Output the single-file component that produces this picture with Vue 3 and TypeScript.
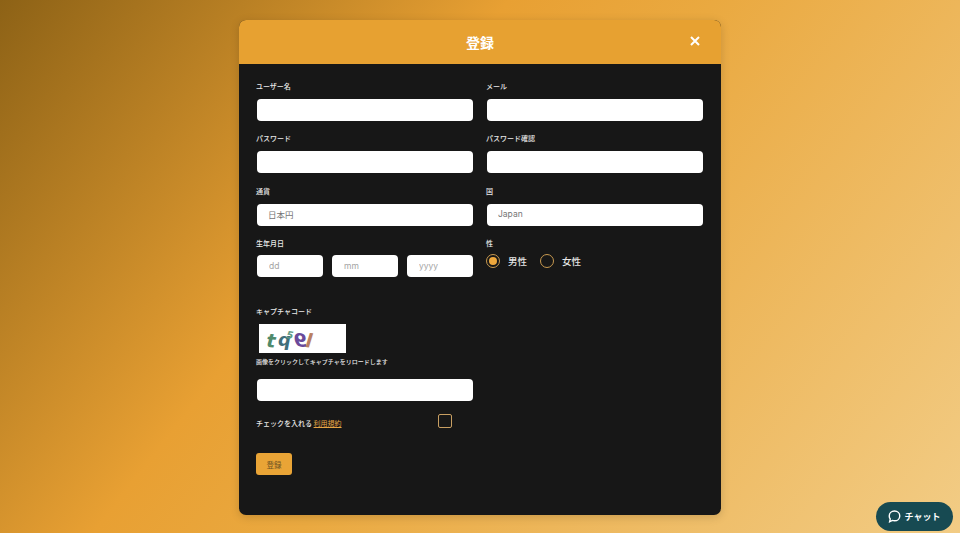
<script setup lang="ts">
const rows = [
  { label: 'ユーザー名', value: '' },
  { label: 'メール', value: '' },
  { label: 'パスワード', value: '' },
  { label: 'パスワード確認', value: '' },
  { label: '通貨', value: '日本円' },
  { label: '国', value: 'Japan' },
]
const dates = ['dd', 'mm', 'yyyy']
const captcha = [
  { ch: 't', transform: 'translate(7 23) rotate(4)', s: 19, c: '#4f8a6b' },
  { ch: 'q', transform: 'translate(19 22)', s: 18, c: '#3f6f7c' },
  { ch: '5', transform: 'translate(27 14) rotate(8)', s: 10, c: '#5f9a84' },
  { ch: '9', transform: 'translate(48 23) scale(-1 1)', s: 19, c: '#6a4a9a' },
  { ch: 'l', transform: 'translate(46 23) rotate(6)', s: 19, c: '#b97f62' },
]
</script>

<template>
  <div class="page">
    <section class="modal">
      <header class="head">
        <h1>登録</h1>
        <svg class="close" viewBox="0 0 12 12" aria-label="閉じる">
          <path d="M2 2 10 10M10 2 2 10" />
        </svg>
      </header>
      <form class="body" @submit.prevent>
        <div class="grid">
          <div v-for="row in rows" :key="row.label" class="field">
            <label>{{ row.label }}</label>
            <input class="input" type="text" :value="row.value" />
          </div>
          <div class="field">
            <label>生年月日</label>
            <div class="dates">
              <input v-for="d in dates" :key="d" class="input date" type="text" :placeholder="d" />
            </div>
          </div>
          <div class="field">
            <label>性</label>
            <div class="radios">
              <span class="radio on"></span><span class="rlabel">男性</span>
              <span class="radio"></span><span class="rlabel">女性</span>
            </div>
          </div>
        </div>

        <div class="captcha-col">
          <label>キャプチャコード</label>
          <svg class="captcha" viewBox="0 0 87 29">
            <text
              v-for="g in captcha"
              :key="g.ch"
              :fill="g.c"
              :font-size="g.s"
              :transform="g.transform"
            >{{ g.ch }}</text>
          </svg>
          <p class="note">画像をクリックしてキャプチャをリロードします</p>
          <input class="input" type="text" />
        </div>

        <div class="terms">
          <span class="agree">チェックを入れる <a href="#">利用規約</a></span>
          <span class="check"></span>
        </div>
        <button class="submit" type="submit">登録</button>
      </form>
    </section>
    <button class="chat">
      <svg viewBox="0 0 16 16"><path d="M8 2.200c3.300 0 5.600 2.300 5.600 5.200S11.300 12.600 8 12.600c-.8 0-1.500-.1-2.200-.4L2.800 13.600l.7-2.900C2.800 9.800 2.400 8.700 2.400 7.400 2.400 4.500 4.700 2.200 8 2.200Z" /></svg>
      <span>チャット</span>
    </button>
  </div>
</template>

<style>
html, body { margin: 0; padding: 0; }
</style>

<style scoped>
.page {
  position: relative;
  box-sizing: border-box;
  width: 960px;
  height: 533px;
  overflow: hidden;
  padding-top: 20px;
  background: linear-gradient(128deg, #8d6216 0%, #e8a033 37%, #eaa940 52%, #f2cc85 100%);
  font-family: "Noto Sans CJK JP", "Noto Sans", sans-serif;
}
.modal {
  width: 482px;
  height: 495px;
  margin: 0 0 0 239px;
  border-radius: 7px;
  overflow: hidden;
  background: #171717;
  box-shadow: 0 2px 10px rgba(0, 0, 0, 0.16);
}
.head {
  position: relative;
  display: flex;
  align-items: center;
  justify-content: center;
  height: 44px;
  background: #e7a131;
}
h1 {
  margin: 0;
  color: #fff;
  font-size: 14px;
  font-weight: 700;
  line-height: 44px;
}
.close {
  position: absolute;
  right: 20px;
  top: 15px;
  width: 12px;
  height: 12px;
  fill: none;
  stroke: #fff;
  stroke-width: 2;
}
.body {
  padding: 17px 17px 0;
}
.grid {
  display: grid;
  grid-template-columns: 218px 218px;
  column-gap: 12px;
  row-gap: 9px;
}
.field {
  display: flex;
  flex-direction: column;
  height: 43.300px;
}
label {
  display: block;
  height: 12px;
  margin-bottom: 6px;
  color: #e8e8e8;
  font-size: 7px;
  font-weight: 500;
  line-height: 11px;
}
.input {
  display: block;
  box-sizing: border-box;
  width: 216px;
  height: 22px;
  margin: 0 1px;
  padding: 0 11px 2px;
  border: 0;
  border-radius: 4px;
  outline: 0;
  background: #fff;
  color: #757575;
  font-family: Inter, "Noto Sans CJK JP", sans-serif;
  font-size: 8.500px;
}
.input::placeholder { color: #a3a3a3; opacity: 1; }
.dates {
  display: flex;
  gap: 9px;
  width: 216px;
  margin: -1px 1px 0;
}
.date {
  width: 66px;
  margin: 0;
  padding: 0 12px;
}
.radios {
  display: flex;
  align-items: center;
  height: 14px;
  margin-top: -2px;
}
.radio {
  box-sizing: border-box;
  display: flex;
  width: 14px;
  height: 14px;
  border: 1.500px solid #c89a50;
  border-radius: 50%;
}
.radio.on::after {
  content: "";
  width: 8px;
  height: 8px;
  margin: auto;
  border-radius: 50%;
  background: #efa83c;
}
.rlabel {
  width: 32px;
  margin-left: 8px;
  color: #e6e6e6;
  font-size: 9.500px;
  font-weight: 500;
}
.captcha-col {
  width: 218px;
  margin-top: 24.500px;
}
.captcha-col label { margin-bottom: 6.500px; }
.captcha {
  display: block;
  width: 87px;
  height: 29px;
  margin-left: 3px;
  background: #fff;
  font-family: "DejaVu Sans", sans-serif;
  font-style: italic;
  font-weight: 700;
}
.note {
  height: 12px;
  margin: 3px 0 11px;
  color: #e8e8e8;
  font-size: 6px;
  font-weight: 500;
  line-height: 12px;
}
.terms {
  position: relative;
  width: 218px;
  height: 14px;
  margin-top: 16px;
}
.agree {
  color: #e8e8e8;
  font-size: 7px;
  font-weight: 500;
  line-height: 12px;
  display: block;
}
.agree a {
  color: #e7a545;
  font-weight: 400;
}
.check {
  position: absolute;
  left: 182px;
  top: -3px;
  box-sizing: border-box;
  width: 14px;
  height: 14px;
  border: 1.500px solid #c89f62;
  border-radius: 2px;
}
.submit {
  display: block;
  width: 36px;
  height: 22px;
  margin-top: 22px;
  padding: 0;
  border: 0;
  border-radius: 3px;
  background: #e9a436;
  color: #6d5223;
  font-family: inherit;
  font-size: 7.500px;
}
.chat {
  position: absolute;
  left: 876px;
  top: 502px;
  display: flex;
  align-items: center;
  justify-content: center;
  gap: 3px;
  width: 77px;
  height: 29px;
  padding: 0 2px 0 0;
  border: 0;
  border-radius: 15px;
  background: #174a52;
  color: #fff;
  font-family: inherit;
  font-size: 9px;
  font-weight: 700;
}
.chat svg {
  width: 15px;
  height: 15px;
  fill: none;
  stroke: #fff;
  stroke-width: 1.500;
}
</style>
